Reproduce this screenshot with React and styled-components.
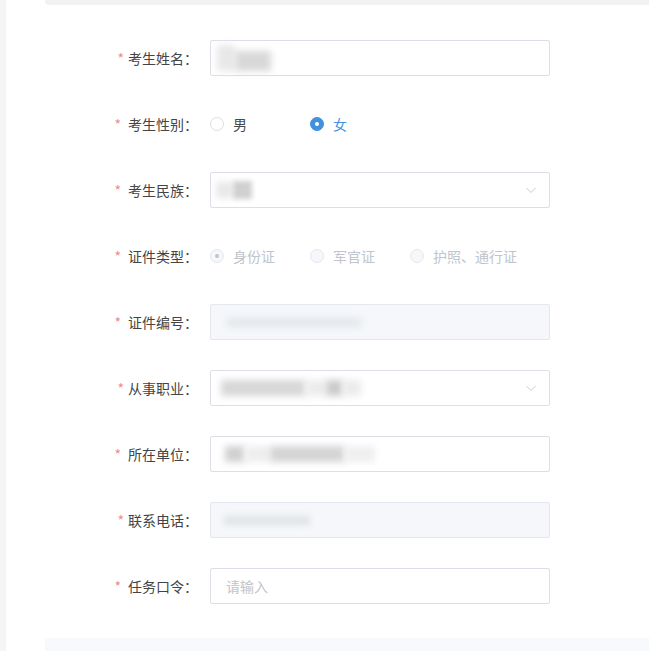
import React from "react";
import styled, { createGlobalStyle } from "styled-components";

const Global = createGlobalStyle`
  html, body { margin: 0; padding: 0; background: #fff; }
  body { font-family: "Noto Sans CJK SC", "Noto Sans", sans-serif; }
  * { box-sizing: border-box; }
`;

const Page = styled.div`
  display: flex;
  height: 651px;
  background: #fff;
`;

const SideStrip = styled.div`
  width: 6px;
  flex: none;
  background: #f5f5f5;
`;

const Main = styled.div`
  flex: 1;
  display: flex;
  flex-direction: column;
  padding-left: 39px;
`;

const TopBar = styled.div`
  height: 5px;
  flex: none;
  background: #f2f2f2;
  border-bottom-left-radius: 4px;
`;

const Form = styled.div`
  display: flex;
  flex-direction: column;
  gap: 30px;
  padding: 35px 0 34px;
`;

const BottomBar = styled.div`
  flex: 1;
  background: #f7f9fc;
`;

const Row = styled.div`
  display: flex;
  align-items: center;
  height: 36px;
`;

const Label = styled.label`
  width: 165px;
  flex: none;
  padding-right: 12px;
  text-align: right;
  font-size: 14px;
  line-height: 36px;
  color: #444;
  white-space: nowrap;
`;

const Star = styled.span`
  color: #f08a8a;
  margin-right: ${(p) => (p.$tight ? "4px" : "7px")};
`;

const InputBox = styled.div`
  width: 340px;
  height: 36px;
  flex: none;
  display: flex;
  align-items: center;
  padding: 0 12px 0 ${(p) => p.$pad || 15}px;
  border: 1px solid ${(p) => (p.$disabled ? "#e4e7ed" : "#dcdfe6")};
  border-radius: 2px;
  background: ${(p) => (p.$disabled ? "#f5f7fa" : "#fff")};
  font-size: 14px;
`;

const Value = styled.div`
  flex: 1;
  display: flex;
  align-items: center;
  height: 100%;
`;

const Blur = styled.span`
  display: inline-block;
  width: ${(p) => p.$w}px;
  height: ${(p) => p.$h || 18}px;
  margin-top: ${(p) => p.$dy || 0}px;
  background: ${(p) => p.$c};
  filter: blur(${(p) => p.$b || 3.5}px);
  flex: none;
`;

const Placeholder = styled.span`
  color: #c0c4cc;
  font-size: 14px;
`;

const Chevron = styled.svg`
  width: 12px;
  height: 12px;
  flex: none;
`;

const RadioGroup = styled.div`
  display: flex;
  align-items: center;
`;

const RadioItem = styled.div`
  min-width: 100px;
  display: flex;
  align-items: center;
  gap: 9px;
  white-space: nowrap;
  font-size: 14px;
  color: ${(p) => (p.$disabled ? "#c0c4cc" : p.$checked ? "#4291e0" : "#4a4a4a")};
`;

const RadioDot = styled.span`
  width: 14px;
  height: 14px;
  border-radius: 50%;
  flex: none;
  display: flex;
  align-items: center;
  justify-content: center;
  border: 1px solid
    ${(p) => (p.$disabled ? "#e4e7ed" : p.$checked ? "#4291e0" : "#dcdfe6")};
  background: ${(p) => (p.$disabled ? "#f5f7fa" : p.$checked ? "#4291e0" : "#fff")};
  &::after {
    content: "";
    width: 4px;
    height: 4px;
    border-radius: 50%;
    background: ${(p) => (p.$disabled ? "#c0c4cc" : "#fff")};
    display: ${(p) => (p.$checked ? "block" : "none")};
  }
`;

const Arrow = () => (
  <Chevron viewBox="0 0 12 12">
    <polyline points="1.5,4 6,8.5 10.5,4" fill="none" stroke="#c8ccd3" strokeWidth="1" />
  </Chevron>
);

const Field = ({ label, tight, children }) => (
  <Row>
    <Label>
      <Star $tight={tight}>*</Star>
      {label}：
    </Label>
    {children}
  </Row>
);

const Radio = ({ label, checked, disabled }) => (
  <RadioItem $checked={checked} $disabled={disabled}>
    <RadioDot $checked={checked} $disabled={disabled} />
    {label}
  </RadioItem>
);

export default function App() {
  return (
    <>
      <Global />
      <Page>
        <SideStrip />
        <Main>
          <TopBar />
          <Form>
            <Field label="考生姓名" tight>
              <InputBox $pad={6}>
                <Value>
                  <Blur $w={18} $h={26} $c="#e8e8e8" />
                  <Blur $w={36} $h={20} $dy={6} $c="#d8d8d8" />
                </Value>
              </InputBox>
            </Field>

            <Field label="考生性别">
              <RadioGroup>
                <Radio label="男" />
                <Radio label="女" checked />
              </RadioGroup>
            </Field>

            <Field label="考生民族">
              <InputBox $pad={5}>
                <Value>
                  <Blur $w={17} $h={16} $c="#e8e8e8" />
                  <Blur $w={19} $h={18} $c="#d0d0d0" $b={2.5} />
                </Value>
                <Arrow />
              </InputBox>
            </Field>

            <Field label="证件类型">
              <RadioGroup>
                <Radio label="身份证" checked disabled />
                <Radio label="军官证" disabled />
                <Radio label="护照、通行证" disabled />
              </RadioGroup>
            </Field>

            <Field label="证件编号">
              <InputBox $disabled $pad={16}>
                <Value>
                  <Blur $w={134} $h={9} $c="#e3e6ea" $b={3.5} />
                </Value>
              </InputBox>
            </Field>

            <Field label="从事职业" tight>
              <InputBox $pad={10}>
                <Value>
                  <Blur $w={85} $h={16} $c="#d7d7d7" />
                  <Blur $w={20} $h={16} $c="#ececec" />
                  <Blur $w={17} $h={16} $c="#cbcbcb" />
                  <Blur $w={18} $h={16} $c="#ebebeb" />
                </Value>
                <Arrow />
              </InputBox>
            </Field>

            <Field label="所在单位">
              <InputBox $pad={14}>
                <Value>
                  <Blur $w={20} $h={16} $c="#d0d0d0" />
                  <Blur $w={25} $h={16} $c="#eeeeee" />
                  <Blur $w={75} $h={16} $c="#d4d4d4" />
                  <Blur $w={30} $h={16} $c="#efefef" />
                </Value>
              </InputBox>
            </Field>

            <Field label="联系电话" tight>
              <InputBox $disabled $pad={13}>
                <Value>
                  <Blur $w={86} $h={9} $c="#e0e3e7" $b={3} />
                </Value>
              </InputBox>
            </Field>

            <Field label="任务口令">
              <InputBox>
                <Value>
                  <Placeholder>请输入</Placeholder>
                </Value>
              </InputBox>
            </Field>
          </Form>
          <BottomBar />
        </Main>
      </Page>
    </>
  );
}
